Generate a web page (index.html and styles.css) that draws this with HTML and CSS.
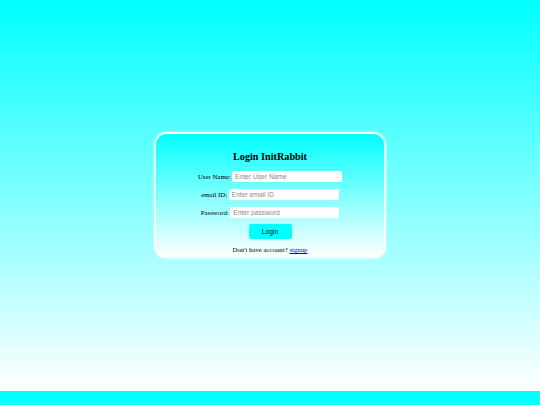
FILE: index.html
```html
<!DOCTYPE html>
<html lang="en">
<head>
<meta charset="utf-8">
<title>Login InitRabbit</title>
<link rel="stylesheet" href="styles.css">
</head>
<body>
  <form class="card">
    <h2 class="title">Login InitRabbit</h2>
    <div class="row">
      <label class="label" for="u">User Name:</label>
      <input class="field" id="u" type="text" placeholder="Enter User Name">
    </div>
    <div class="row">
      <label class="label" for="e">email ID:</label>
      <input class="field" id="e" type="text" placeholder="Enter email ID">
    </div>
    <div class="row">
      <label class="label" for="p">Password:</label>
      <input class="field field-pw" id="p" type="password" placeholder="Enter password">
    </div>
    <button class="btn" type="button">Login</button>
    <p class="foot">Don't have account? <a class="link" href="#">signup</a></p>
  </form>
</body>
</html>
```
FILE: styles.css
```css
html {
  margin: 0;
}
body {
  margin: 0;
  height: 391px;
  background: linear-gradient(to bottom, #00ffff, #ffffff);
  display: flex;
  align-items: center;
  justify-content: center;
  font-family: "Liberation Serif", "Times New Roman", serif;
  color: #000;
}
.card {
  box-sizing: border-box;
  width: 232px;
  height: 127px;
  border: 2px solid rgba(255, 255, 255, 0.85);
  border-radius: 13px;
  box-shadow: 0 0 3px rgba(255, 255, 255, 0.7);
  background: linear-gradient(to bottom, #00ffff, #ffffff);
  display: flex;
  flex-direction: column;
  align-items: center;
  padding-top: 17px;
}
.title {
  margin: 0 0 8px 0;
  font-size: 10.2px;
  line-height: 12px;
  font-weight: bold;
}
.row {
  display: flex;
  align-items: center;
  gap: 1.5px;
  height: 11px;
  margin-bottom: 7px;
}
.label {
  font-size: 6.8px;
  line-height: 11px;
}
.field {
  box-sizing: border-box;
  width: 110px;
  height: 11px;
  border: none;
  border-radius: 1px;
  background: #fff;
  padding: 0 3px;
  margin: 0;
  font-family: "Liberation Sans", Arial, sans-serif;
  font-size: 6.7px;
  outline: none;
}
.field-pw {
  width: 109px;
}
.field::placeholder {
  color: #8a8a8a;
}
.btn {
  margin-top: -1px;
  width: 43px;
  height: 15px;
  border: none;
  border-radius: 2px;
  background: #00ffff;
  font-family: "Liberation Sans", Arial, sans-serif;
  font-size: 6.7px;
  color: #111;
  padding: 0;
}
.foot {
  margin: 6px 0 0 0;
  font-size: 6.8px;
  line-height: 9px;
}
.link {
  color: #0000ee;
  text-decoration: underline;
}
```
